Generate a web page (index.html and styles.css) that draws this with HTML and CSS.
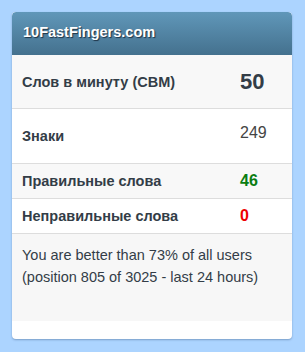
FILE: index.html
```html
<!DOCTYPE html>
<html>
<head>
<meta charset="utf-8">
<link rel="stylesheet" href="styles.css">
</head>
<body>
<div class="card">
  <div class="card-head">10FastFingers.com</div>
  <div class="row row-wpm striped">
    <div class="label">Слов в минуту (СВМ)</div>
    <div class="value value-wpm">50</div>
  </div>
  <div class="row row-chars">
    <div class="label">Знаки</div>
    <div class="value value-chars">249</div>
  </div>
  <div class="row row-small striped">
    <div class="label">Правильные слова</div>
    <div class="value value-good">46</div>
  </div>
  <div class="row row-small">
    <div class="label">Неправильные слова</div>
    <div class="value value-bad">0</div>
  </div>
  <div class="summary">You are better than 73% of all users (position 805 of 3025 - last 24 hours)</div>
</div>
</body>
</html>
```
FILE: styles.css
```css
html, body {
  margin: 0;
  padding: 0;
}
body {
  background: #acd4ff;
  font-family: "Liberation Sans", Arial, sans-serif;
  color: #333d47;
  padding: 12px 13px 13px 12px;
}
.card {
  width: 280px;
  background: #fff;
  border-radius: 4px;
  box-shadow: 0 1px 2px rgba(60, 90, 130, 0.45);
  padding-bottom: 18px;
  overflow: hidden;
}
.card-head {
  height: 43px;
  box-sizing: border-box;
  padding: 12px 10px 0 11px;
  background: linear-gradient(#6097b9, #44718e);
  color: #fff;
  font-weight: bold;
  font-size: 14.5px;
  text-shadow: 1px 1px 1px #1e3346;
  border-radius: 4px 4px 0 0;
}
.row {
  display: grid;
  grid-template-columns: 1fr 52px;
  align-items: center;
  border-bottom: 1px solid #dddddd;
  padding-left: 10px;
}
.striped {
  background: #f8f8f8;
}
.row-wpm {
  height: 53px;
}
.row-chars {
  height: 54px;
}
.row-small {
  height: 34px;
}
.label {
  font-weight: bold;
  font-size: 14.5px;
}
.value {
  font-size: 16px;
}
.value-wpm {
  font-weight: bold;
  font-size: 22px;
}
.value-chars {
  color: #444;
  margin-top: -6px;
}
.value-good {
  font-weight: bold;
  color: #0a7d12;
}
.value-bad {
  font-weight: bold;
  color: #ee0000;
}
.summary {
  background: #f7f7f7;
  height: 87px;
  box-sizing: border-box;
  padding: 10px 12px 0 10px;
  font-size: 14.5px;
  line-height: 22px;
}
```
